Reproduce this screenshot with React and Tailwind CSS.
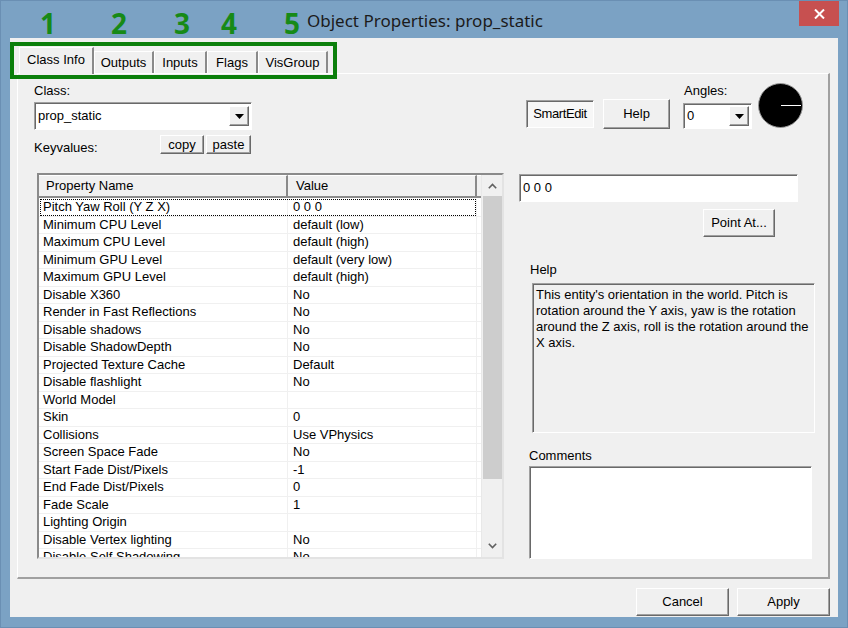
import React from 'react';

const raised =
  'border border-t-white border-l-white border-r-[#696969] border-b-[#696969] shadow-[inset_-1px_-1px_0_#a0a0a0] bg-[#f0f0f0]';
const sunken =
  'border border-t-[#a0a0a0] border-l-[#a0a0a0] border-r-white border-b-white shadow-[inset_1px_1px_0_#696969]';

const rows = [
  ['Pitch Yaw Roll (Y Z X)', '0 0 0'],
  ['Minimum CPU Level', 'default (low)'],
  ['Maximum CPU Level', 'default (high)'],
  ['Minimum GPU Level', 'default (very low)'],
  ['Maximum GPU Level', 'default (high)'],
  ['Disable X360', 'No'],
  ['Render in Fast Reflections', 'No'],
  ['Disable shadows', 'No'],
  ['Disable ShadowDepth', 'No'],
  ['Projected Texture Cache', 'Default'],
  ['Disable flashlight', 'No'],
  ['World Model', ''],
  ['Skin', '0'],
  ['Collisions', 'Use VPhysics'],
  ['Screen Space Fade', 'No'],
  ['Start Fade Dist/Pixels', '-1'],
  ['End Fade Dist/Pixels', '0'],
  ['Fade Scale', '1'],
  ['Lighting Origin', ''],
  ['Disable Vertex lighting', 'No'],
  ['Disable Self Shadowing', 'No'],
];

const tabs = [
  { label: 'Class Info', w: 'w-[75px]', active: true },
  { label: 'Outputs', w: 'w-[60px]' },
  { label: 'Inputs', w: 'w-[53px]' },
  { label: 'Flags', w: 'w-[51px]' },
  { label: 'VisGroup', w: 'w-[70px]' },
];

const Arrow = () => (
  <svg width="9" height="5" viewBox="0 0 9 5">
    <path d="M0 0h9L4.5 5z" fill="#000" />
  </svg>
);

const DropButton = () => (
  <div className={`${raised} w-[20px] h-[20px] flex items-center justify-center`}>
    <Arrow />
  </div>
);

const Btn = ({ children, className }) => (
  <div className={`${raised} flex items-center justify-center ${className}`}>{children}</div>
);

export default function App() {
  return (
    <div
      className="w-[848px] h-[628px] bg-[#7ba2c4] border border-[#6a8fb3] flex flex-col text-[13px] text-black"
      style={{ fontFamily: '"Liberation Sans", Arial, sans-serif' }}
    >
      {/* Title bar */}
      <div className="relative h-[37px] shrink-0">
        <div
          className="absolute left-[306px] top-[7px] text-[17px] text-[#1b1b1b]"
          style={{ fontFamily: '"Noto Sans", sans-serif' }}
        >
          Object Properties: prop_static
        </div>
        <div
          className="absolute top-[2px] left-0 text-[28px] font-bold text-[#178a17] leading-none"
          style={{ fontFamily: '"Open Sans", sans-serif' }}
        >
          <span className="absolute left-[39px] top-[6px]">1</span>
          <span className="absolute left-[110px] top-[6px]">2</span>
          <span className="absolute left-[173px] top-[6px]">3</span>
          <span className="absolute left-[220px] top-[6px]">4</span>
          <span className="absolute left-[283px] top-[6px]">5</span>
        </div>
        <div className="absolute right-[8px] top-0 w-[40px] h-[25px] bg-[#c75050] flex items-center justify-center">
          <svg width="11" height="10" viewBox="0 0 11 10">
            <path d="M1 0.5l9 9M10 0.5l-9 9" stroke="#fff" strokeWidth="2" />
          </svg>
        </div>
      </div>

      {/* Client */}
      <div className="relative mx-[9px] h-[579px] bg-[#f0f0f0] flex flex-col">
        {/* annotation box round the tabs */}
        <div className="absolute left-0 top-[4px] w-[327px] h-[37px] border-4 border-[#0b7f0b] z-20" />

        {/* tab strip */}
        <div className="h-[35px] flex items-end pl-[9px] relative z-10">
          {tabs.map((t) => (
            <div
              key={t.label}
              className={`${t.w} border-t border-l border-t-white border-l-white border-r-2 border-r-[#8a8a8a] flex items-center justify-center bg-[#f0f0f0] ${
                t.active ? 'h-[27px] -mb-[1px] pb-[3px]' : 'h-[22px]'
              }`}
            >
              {t.label}
            </div>
          ))}
        </div>

        {/* tab panel */}
        <div className="ml-[7px] w-[813px] h-[506px] border-t border-l border-t-white border-l-white border-r-2 border-b-2 border-r-[#a0a0a0] border-b-[#a0a0a0] flex">
          {/* left column */}
          <div className="w-[486px] pl-[16px] flex flex-col">
            <div className="mt-[9px] leading-[15px]">Class:</div>
            <div className={`${sunken} mt-[4px] w-[218px] h-[28px] bg-white flex items-center justify-between pl-[3px] pr-[2px]`}>
              <span>prop_static</span>
              <DropButton />
            </div>
            <div className="mt-[5px] flex h-[19px]">
              <div className="w-[126px] pt-[5px] leading-[15px]">Keyvalues:</div>
              <Btn className="w-[44px] h-[19px]">copy</Btn>
              <Btn className="ml-[2px] w-[45px] h-[19px]">paste</Btn>
            </div>

            {/* property table */}
            <div className="mt-[19px] ml-[3px] w-[467px] h-[386px] border-2 border-t-[#8a8a8a] border-l-[#8a8a8a] border-r-[#e3e3e3] border-b-[#e3e3e3] bg-white flex overflow-hidden">
              <div className="w-[442px] flex flex-col">
                <div className="h-[23px] flex bg-[#f0f0f0] shrink-0">
                  <div className="w-[249px] border-r-2 border-r-[#8a8a8a] border-t border-t-white border-b-2 border-b-[#8a8a8a] pl-[7px] flex items-center">
                    Property Name
                  </div>
                  <div className="w-[189px] border-r-2 border-r-[#8a8a8a] border-t border-t-white border-b-2 border-b-[#8a8a8a] pl-[8px] flex items-center">
                    Value
                  </div>
                  <div className="w-[4px] border-b-2 border-b-[#8a8a8a] border-t border-t-white" />
                </div>
                <div className="pt-[1px] flex flex-col">
                  {rows.map(([name, value], i) => (
                    <div key={name} className="relative h-[17.5px] shrink-0 flex border-b border-b-[#f0f0f0]">
                      <div className="w-[249px] pl-[4px] border-r border-r-[#f0f0f0] leading-[16px] whitespace-nowrap overflow-hidden">
                        {name}
                      </div>
                      <div className="w-[189px] pl-[5px] border-r border-r-[#f0f0f0] leading-[16px] whitespace-nowrap overflow-hidden">
                        {value}
                      </div>
                      {i === 0 && (
                        <div className="absolute left-[1px] top-0 w-[436px] h-[17px] border border-dotted border-black" />
                      )}
                    </div>
                  ))}
                </div>
              </div>
              {/* scrollbar */}
              <div className="w-[21px] bg-[#f0f0f0] flex flex-col items-center border-l border-l-[#e8e8e8]">
                <div className="h-[21px] flex items-center justify-center shrink-0">
                  <svg width="9" height="6" viewBox="0 0 9 6">
                    <path d="M0.8 5.2L4.5 1.5L8.2 5.2" stroke="#606060" strokeWidth="1.6" fill="none" />
                  </svg>
                </div>
                <div className="w-[19px] h-[283px] bg-[#cdcdcd]" />
                <div className="flex-1" />
                <div className="h-[21px] flex items-center justify-center shrink-0 mb-[1px]">
                  <svg width="9" height="6" viewBox="0 0 9 6">
                    <path d="M0.8 0.8L4.5 4.5L8.2 0.8" stroke="#606060" strokeWidth="1.6" fill="none" />
                  </svg>
                </div>
              </div>
            </div>
          </div>

          {/* right column */}
          <div className="ml-[15px] w-[300px] flex flex-col">
            <div className="mt-[9px] ml-[7px] h-[47px] flex items-start">
              <div className={`${sunken} mt-[17px] w-[68px] h-[28px] bg-[#f7f7f7] flex items-center justify-center tracking-[-0.4px]`}>
                SmartEdit
              </div>
              <Btn className="ml-[9px] mt-[16px] w-[67px] h-[30px]">Help</Btn>
              <div className="ml-[13px] flex flex-col">
                <div className="leading-[15px] pl-[1px]">Angles:</div>
                <div className={`${sunken} mt-[5px] w-[69px] h-[26px] bg-white flex items-center justify-between pl-[3px] pr-[2px]`}>
                  <span>0</span>
                  <DropButton />
                </div>
              </div>
              <div className="ml-[6px] w-[45px] h-[45px] rounded-full bg-black border border-[#9a9a9a] flex items-center justify-end">
                <div className="w-[20px] h-[1px] bg-white mr-[1px]" />
              </div>
            </div>

            <div className={`${sunken} mt-[44px] w-[279px] h-[28px] bg-white flex items-center pl-[3px]`}>0 0 0</div>

            <Btn className="mt-[7px] ml-[184px] w-[72px] h-[28px]">Point At...</Btn>

            <div className="mt-[25px] ml-[11px] leading-[15px]">Help</div>
            <div className={`${sunken} mt-[6px] ml-[13px] w-[283px] h-[150px] bg-[#f0f0f0] pl-[3px] pt-[3px] leading-[16px] whitespace-nowrap`}>
              This entity's orientation in the world. Pitch is
              <br />
              rotation around the Y axis, yaw is the rotation
              <br />
              around the Z axis, roll is the rotation around the
              <br />X axis.
            </div>

            <div className="mt-[15px] ml-[10px] leading-[15px]">Comments</div>
            <div className={`${sunken} mt-[3px] ml-[10px] w-[283px] h-[93px] bg-white`} />
          </div>
        </div>

        {/* dialog buttons */}
        <div className="mt-[9px] flex justify-end pr-[8px]">
          <Btn className="w-[93px] h-[28px]">Cancel</Btn>
          <Btn className="ml-[8px] w-[93px] h-[28px]">Apply</Btn>
        </div>
      </div>
    </div>
  );
}
